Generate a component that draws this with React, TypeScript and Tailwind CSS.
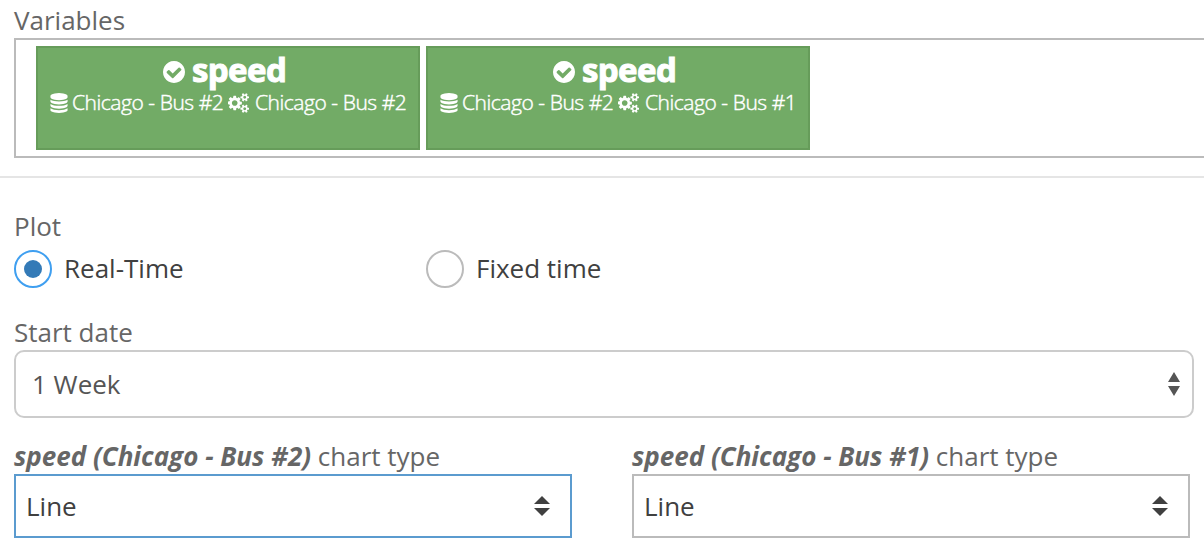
import React from "react";

function CheckCircle({ className }: { className: string }) {
  return (
    <svg viewBox="128 128 1536 1536" className={className} fill="currentColor">
      <path d="M1412 734q0-28-18-46l-91-90q-19-19-45-19t-45 19l-408 407-226-226q-19-19-45-19t-45 19l-91 90q-18 18-18 46 0 27 18 45l362 362q19 19 45 19 27 0 46-19l543-543q18-18 18-45zm252 162q0 209-103 385.5t-279.5 279.5-385.5 103-385.5-103-279.5-279.5-103-385.5 103-385.5 279.5-279.5 385.5-103 385.5 103 279.5 279.5 103 385.5z" />
    </svg>
  );
}

function Database({ className }: { className: string }) {
  return (
    <svg viewBox="128 0 1536 1792" className={className} fill="currentColor">
      <path d="M896 768q237 0 443-43t325-127v170q0 69-103 128t-280 93.500-385 34.500-385-34.500-280-93.500-103-128v-170q119 84 325 127t443 43zm0 768q237 0 443-43t325-127v170q0 69-103 128t-280 93.500-385 34.500-385-34.500-280-93.500-103-128v-170q119 84 325 127t443 43zm0-384q237 0 443-43t325-127v170q0 69-103 128t-280 93.500-385 34.500-385-34.500-280-93.500-103-128v-170q119 84 325 127t443 43zm0-1152q208 0 385 34.500t280 93.500 103 128v128q0 69-103 128t-280 93.500-385 34.500-385-34.500-280-93.500-103-128v-128q0-69 103-128t280-93.500 385-34.500z" />
    </svg>
  );
}

function Cogs({ className }: { className: string }) {
  return (
    <svg viewBox="0 0 1920 1792" className={className} fill="currentColor">
      <path d="M832 896q0-106-75-181t-181-75-181 75-75 181 75 181 181 75 181-75 75-181zm768 512q0-52-38-90t-90-38-90 38-38 90q0 53 37.500 90.500t90.500 37.500 90.500-37.500 37.500-90.500zm0-1024q0-52-38-90t-90-38-90 38-38 90q0 53 37.500 90.500t90.500 37.500 90.500-37.500 37.500-90.500zm-384 421v185q0 10-7 19.500t-16 10.500l-155 24q-11 35-32 76 34 48 90 115 7 11 7 20 0 12-7 19-23 30-82.500 89.500t-78.500 59.500q-11 0-21-7l-115-90q-37 19-77 31-11 108-23 155-7 24-30 24h-186q-11 0-20-7.500t-10-17.500l-23-153q-34-10-75-31l-118 89q-7 7-20 7-11 0-21-8-144-133-144-160 0-9 7-19 10-14 41-53t47-61q-23-44-35-82l-152-24q-10-1-17-9.500t-7-19.500v-185q0-10 7-19.500t16-10.500l155-24q11-35 32-76-34-48-90-115-7-11-7-20 0-12 7-20 22-30 82-89t79-59q11 0 21 7l115 90q34-18 77-32 11-108 23-154 7-24 30-24h186q11 0 20 7.500t10 17.500l23 153q34 10 75 31l118-89q8-7 20-7 11 0 21 8 144 133 144 160 0 8-7 19-12 16-42 54t-45 60q23 48 34 82l152 23q10 2 17 10.500t7 19.500zm640 533v140q0 16-149 31-12 27-30 52 51 113 51 138 0 4-4 7-122 71-124 71-8 0-46-47t-52-68q-20 2-30 2t-30-2q-14 21-52 68t-46 47q-2 0-124-71-4-3-4-7 0-25 51-138-18-25-30-52-149-15-149-31v-140q0-16 149-31 13-29 30-52-51-113-51-138 0-4 4-7 4-2 35-20t59-34 30-16q8 0 46 46.500t52 67.500q20-2 30-2t30 2q51-71 92-112l6-2q4 0 124 70 4 3 4 7 0 25-51 138 17 23 30 52 149 15 149 31zm0-1024v140q0 16-149 31-12 27-30 52 51 113 51 138 0 4-4 7-122 71-124 71-8 0-46-47t-52-68q-20 2-30 2t-30-2q-14 21-52 68t-46 47q-2 0-124-71-4-3-4-7 0-25 51-138-18-25-30-52-149-15-149-31v-140q0-16 149-31 13-29 30-52-51-113-51-138 0-4 4-7 4-2 35-20t59-34 30-16q8 0 46 46.500t52 67.500q20-2 30-2t30 2q51-71 92-112l6-2q4 0 124 70 4 3 4 7 0 25-51 138 17 23 30 52 149 15 149 31z" />
    </svg>
  );
}

function Card({ bus }: { bus: string }) {
  return (
    <div className="flex h-[104px] w-[384px] shrink-0 flex-col items-start border-2 border-[#669c5a] bg-[#72ab66] text-white">
      <div className="ml-[125px] flex h-[44px] items-center gap-[7px] whitespace-nowrap text-[33px] font-bold leading-[44px] tracking-[-0.6px]">
        <CheckCircle className="mt-[4px] size-[22px]" />
        <span className="[-webkit-text-stroke:1px_white]">speed</span>
      </div>
      <div className="ml-[12px] mt-px flex h-[20px] items-center gap-[4px] whitespace-nowrap text-[21px] font-light leading-[20px] tracking-[-0.45px] [-webkit-text-stroke:0.45px_white]">
        <Database className="h-[20px] w-[18px]" />
        <span className="-mt-[2px] w-[152px]">Chicago - Bus #2</span>
        <Cogs className="h-[20px] w-[22px]" />
        <span className="-mt-[2px] ml-px">{bus}</span>
      </div>
    </div>
  );
}

function SelectArrows() {
  return (
    <svg viewBox="0 0 16 20" className="h-[20px] w-[16px]" fill="currentColor">
      <path d="M8 0L16 8H0zM8 20L0 12h16z" />
    </svg>
  );
}

function ChartType({ bus, focused }: { bus: string; focused?: boolean }) {
  return (
    <div className="w-[558px]">
      <div className="whitespace-nowrap">
        <b className="italic">speed (Chicago - Bus #{bus})</b> chart type
      </div>
      <div
        className={`flex h-[64px] items-center justify-between border-2 pl-[10px] pr-[20px] text-[#404040] ${
          focused ? "border-[#5b9bcf]" : "border-[#bbb]"
        }`}
      >
        Line <SelectArrows />
      </div>
    </div>
  );
}

export default function App() {
  return (
    <div className="h-[556px] w-[1204px] overflow-hidden bg-white font-['Open_Sans',sans-serif] text-[26px] leading-[36px] text-[#666]">
      <div className="h-[38px] pl-[14px] pt-[2px]">Variables</div>
      <div className="ml-[14px] flex h-[120px] w-[1200px] gap-[6px] border-2 border-[#bbb] pl-[20px] pt-[6px]">
        <Card bus="Chicago - Bus #2" />
        <Card bus="Chicago - Bus #1" />
      </div>
      <div className="mt-[18px] h-[2px] bg-[#e5e5e5]" />
      <div className="px-[14px] pt-[30px]">
        <div>Plot</div>
        <div className="mt-[6px] flex h-[38px] text-[#404040]">
          <label className="flex w-[412px] items-center gap-[12px]">
            <span className="flex size-[38px] items-center justify-center rounded-full border-2 border-[#3f9ff0]">
              <span className="size-[18px] rounded-full bg-[#337ab7]" />
            </span>
            <span className="-mt-[2px]">Real-Time</span>
          </label>
          <label className="flex items-center gap-[12px]">
            <span className="size-[38px] rounded-full border-2 border-[#bbb]" />
            <span className="-mt-[2px]">Fixed time</span>
          </label>
        </div>
      </div>
      <div className="pl-[14px] pt-[26px]">Start date</div>
      <div className="ml-[14px] flex h-[68px] w-[1180px] items-center justify-between rounded-[10px] border-2 border-[#ccc] pl-[16px] pr-[12px] text-[#555]">
        1 Week
        <svg viewBox="0 0 12 24" className="h-[24px] w-[12px]" fill="currentColor">
          <path d="M6 0L12 10H0zM6 24L0 14h12z" />
        </svg>
      </div>
      <div className="flex gap-[60px] pl-[14px] pt-[20px]">
        <ChartType bus="2" focused />
        <ChartType bus="1" />
      </div>
    </div>
  );
}
